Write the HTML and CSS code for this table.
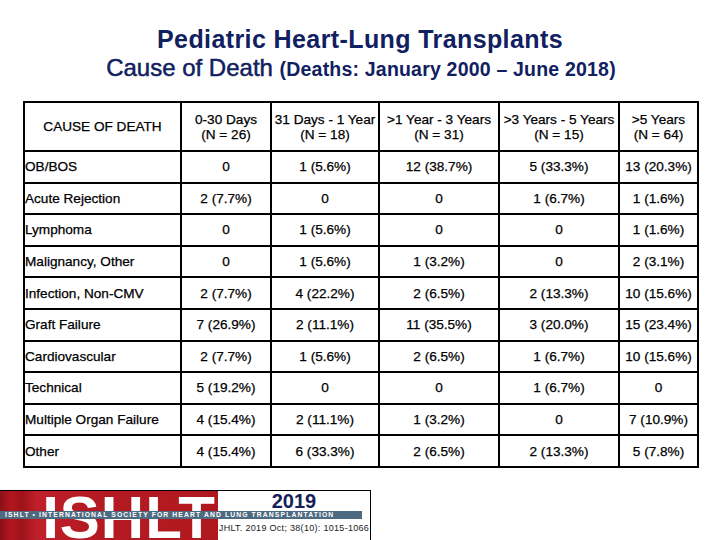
FILE: index.html
```html
<!DOCTYPE html>
<html>
<head>
<meta charset="utf-8">
<link rel="stylesheet" href="styles.css">
</head>
<body>
<header class="title">
  <h1 class="title-main">Pediatric Heart-Lung Transplants</h1>
  <p class="title-sub">Cause of Death <span class="title-small">(Deaths: January 2000 – June 2018)</span></p>
</header>
<table class="cod">
  <colgroup>
    <col class="c1"><col class="c2"><col class="c3"><col class="c4"><col class="c5"><col class="c6">
  </colgroup>
  <thead>
    <tr class="head">
      <th class="name-h">CAUSE OF DEATH</th>
      <th>0-30 Days<br>(N = 26)</th>
      <th>31 Days - 1 Year<br>(N = 18)</th>
      <th>&gt;1 Year - 3 Years<br>(N = 31)</th>
      <th>&gt;3 Years - 5 Years<br>(N = 15)</th>
      <th>&gt;5 Years<br>(N = 64)</th>
    </tr>
  </thead>
  <tbody>
    <tr><td class="name">OB/BOS</td><td>0</td><td>1 (5.6%)</td><td>12 (38.7%)</td><td>5 (33.3%)</td><td>13 (20.3%)</td></tr>
    <tr><td class="name">Acute Rejection</td><td>2 (7.7%)</td><td>0</td><td>0</td><td>1 (6.7%)</td><td>1 (1.6%)</td></tr>
    <tr><td class="name">Lymphoma</td><td>0</td><td>1 (5.6%)</td><td>0</td><td>0</td><td>1 (1.6%)</td></tr>
    <tr><td class="name">Malignancy, Other</td><td>0</td><td>1 (5.6%)</td><td>1 (3.2%)</td><td>0</td><td>2 (3.1%)</td></tr>
    <tr><td class="name">Infection, Non-CMV</td><td>2 (7.7%)</td><td>4 (22.2%)</td><td>2 (6.5%)</td><td>2 (13.3%)</td><td>10 (15.6%)</td></tr>
    <tr><td class="name">Graft Failure</td><td>7 (26.9%)</td><td>2 (11.1%)</td><td>11 (35.5%)</td><td>3 (20.0%)</td><td>15 (23.4%)</td></tr>
    <tr><td class="name">Cardiovascular</td><td>2 (7.7%)</td><td>1 (5.6%)</td><td>2 (6.5%)</td><td>1 (6.7%)</td><td>10 (15.6%)</td></tr>
    <tr><td class="name">Technical</td><td>5 (19.2%)</td><td>0</td><td>0</td><td>1 (6.7%)</td><td>0</td></tr>
    <tr><td class="name">Multiple Organ Failure</td><td>4 (15.4%)</td><td>2 (11.1%)</td><td>1 (3.2%)</td><td>0</td><td>7 (10.9%)</td></tr>
    <tr><td class="name">Other</td><td>4 (15.4%)</td><td>6 (33.3%)</td><td>2 (6.5%)</td><td>2 (13.3%)</td><td>5 (7.8%)</td></tr>
  </tbody>
</table>
<footer class="logo">
  <div class="logo-red"><span class="logo-big">ISHLT</span></div>
  <div class="logo-white">
    <span class="logo-year">2019</span>
    <span class="logo-cite">JHLT. 2019 Oct; 38(10): 1015-1066</span>
  </div>
  <div class="logo-band">ISHLT • INTERNATIONAL SOCIETY FOR HEART AND LUNG TRANSPLANTATION</div>
</footer>
</body>
</html>
```
FILE: styles.css
```css
html, body {
  margin: 0;
  padding: 0;
  background: #ffffff;
}
body {
  width: 720px;
  height: 540px;
  overflow: hidden;
  font-family: "Liberation Sans", Arial, sans-serif;
  color: #000;
}
.title {
  text-align: center;
  color: #102060;
  padding-top: 24px;
}
.title-main {
  margin: 0;
  font-size: 25px;
  line-height: 30px;
  font-weight: bold;
  letter-spacing: 0.4px;
}
.title-sub {
  margin: 0 0 0 2px;
  font-size: 24px;
  line-height: 27px;
  font-weight: normal;
  -webkit-text-stroke: 0.5px #102060;
}
.title-small {
  font-size: 19.5px;
  font-weight: bold;
  -webkit-text-stroke: 0;
  letter-spacing: 0.2px;
}
.cod {
  margin: 18px 0 0 23px;
  width: 674px;
  border-collapse: collapse;
  table-layout: fixed;
  font-size: 13.6px;
}
.c1 { width: 157px; }
.c2 { width: 90px; }
.c3 { width: 108px; }
.c4 { width: 120px; }
.c5 { width: 120px; }
.c6 { width: 79px; }
.cod th, .cod td {
  border: 2px solid #000;
  padding: 0 1px;
  text-align: center;
  vertical-align: middle;
  font-weight: normal;
  line-height: 15px;
  white-space: nowrap;
  -webkit-text-stroke: 0.25px #000;
}
.cod tr.head { height: 49px; }
.cod tbody tr { height: 31.6px; }
.cod td.name { text-align: left; padding-left: 0; }
.cod th.name-h { text-align: center; }
.logo {
  position: relative;
  margin-top: 22px;
  width: 371px;
  height: 50px;
  display: flex;
  border: 1px solid #000;
  border-left: 0;
  border-bottom: 0;
  box-sizing: border-box;
}
.logo-red {
  width: 218px;
  height: 49px;
  overflow: hidden;
  background: linear-gradient(90deg, #8a1017 0%, #b3161f 5%, #9e121a 10%, #c0202a 17%, #b51a22 40%, #b01820 100%);
  display: flex;
  justify-content: flex-end;
  align-items: flex-start;
}
.logo-big {
  color: #fff;
  font-weight: bold;
  font-size: 60px;
  line-height: 60px;
  letter-spacing: 1px;
  margin-top: -3px;
  margin-right: 2px;
}
.logo-white {
  flex: 1;
  display: flex;
  flex-direction: column;
  align-items: center;
  background: #fff;
}
.logo-year {
  font-weight: bold;
  font-size: 20px;
  line-height: 20px;
  color: #15205a;
  margin-top: 0;
}
.logo-cite {
  margin-top: 12px;
  font-size: 9px;
  line-height: 10px;
  color: #222;
  letter-spacing: 0.3px;
}
.logo-band {
  position: absolute;
  left: 0;
  top: 20px;
  width: 362px;
  height: 8px;
  background: #4d6a80;
  color: #fff;
  font-size: 6.8px;
  line-height: 8px;
  font-weight: bold;
  letter-spacing: 1.1px;
  padding-left: 5px;
  box-sizing: border-box;
  white-space: nowrap;
  overflow: hidden;
}
```
